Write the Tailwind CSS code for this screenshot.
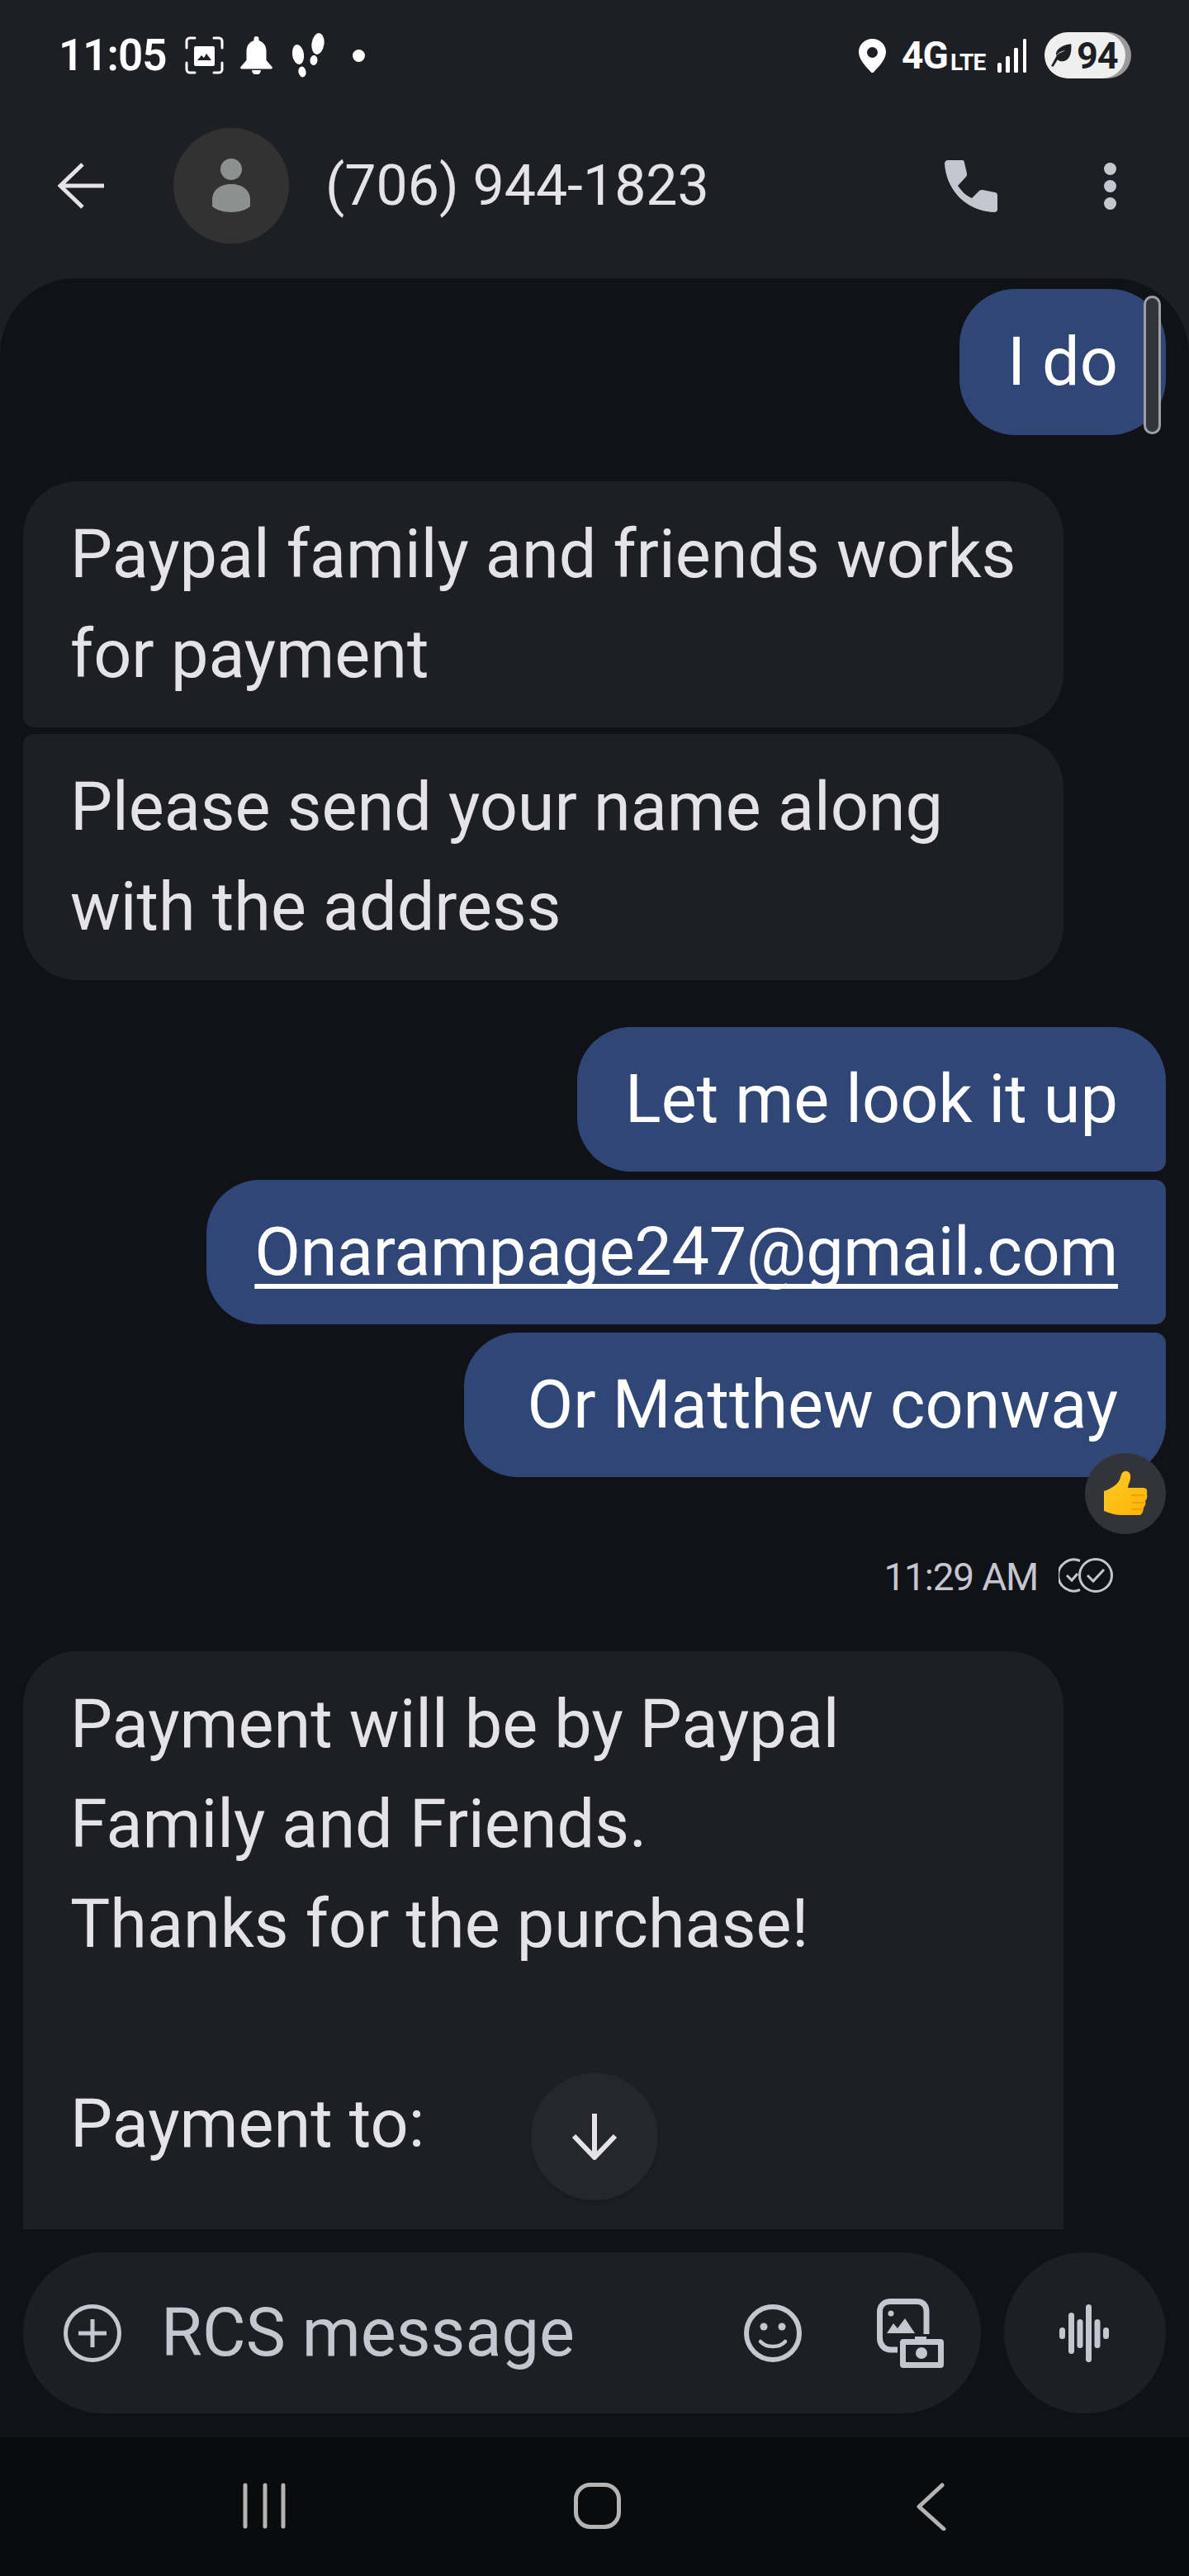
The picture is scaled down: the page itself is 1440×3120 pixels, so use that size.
<!DOCTYPE html>
<html lang="en">
<head>
  <meta charset="UTF-8" />
  <title>Messages</title>
  <script src="https://cdn.jsdelivr.net/npm/@tailwindcss/browser@4"></script>
</head>
<body class="bg-[#1e1f25]">
<div class="w-[1440px] h-[3120px] flex flex-col overflow-hidden bg-[#1e1f25] font-['Roboto',sans-serif]">

  <!-- Status bar -->
  <div class="h-[134px] shrink-0 pl-[71px] pr-[70px] flex items-center justify-between text-white">
    <div class="flex items-center">
      <span class="text-[53px] leading-none font-semibold tracking-[-1px] w-[153px]">11:05</span>
      <svg class="w-[47px] h-[46px] mr-[19px]" viewBox="0 0 47 46" fill="none"><path d="M2 14V6a4 4 0 0 1 4-4h6M35 2h6a4 4 0 0 1 4 4v8M45 32v8a4 4 0 0 1-4 4h-6M12 44H6a4 4 0 0 1-4-4v-8" stroke="#fff" stroke-width="3" stroke-linecap="round"/><rect x="11" y="12" width="25" height="24" rx="2" fill="#fff"/><path d="M15 29l5-6 3 3 3-5 6 8z" fill="#1e1f25"/></svg>
      <svg class="w-[41px] h-[46px] mr-[21px]" viewBox="0 0 41 46" fill="#fff"><path d="M20.500 0a3 3 0 0 1 3 3v2c6 2 9 7 9 13v11l7 8a1.500 1.500 0 0 1-1 2.500H2.500a1.500 1.500 0 0 1-1-2.500l7-8V18c0-6 3-11 9-13V3a3 3 0 0 1 3-3z"/><path d="M15 41h11a5.500 5.500 0 0 1-11 0z"/></svg>
      <svg class="w-[42px] h-[54px] mr-[33px]" viewBox="0 0 42 54" fill="#fff"><ellipse cx="33" cy="13" rx="7.500" ry="13" transform="rotate(8 33 13)"/><ellipse cx="28" cy="33" rx="4.500" ry="6" transform="rotate(8 28 33)"/><ellipse cx="9" cy="26" rx="7" ry="12" transform="rotate(-8 9 26)"/><ellipse cx="14" cy="47" rx="4.500" ry="6.500" transform="rotate(-12 14 47)"/></svg>
      <span class="w-[15px] h-[15px] rounded-full bg-white"></span>
    </div>
    <div class="flex items-center">
      <svg class="w-[33px] h-[41px] mr-[19px]" viewBox="0 0 33 41"><path fill-rule="evenodd" fill="#fff" d="M16.500 0C7.400 0 0 7 0 16c0 9 9 18 14.500 24a2.700 2.700 0 0 0 4 0C24 34 33 25 33 16 33 7 25.600 0 16.500 0zm0 10a6.500 6.500 0 1 1 0 13 6.500 6.500 0 0 1 0-13z"/></svg>
      <span class="text-[46px] leading-none font-bold tracking-[-1px] w-[59px]">4G</span>
      <span class="text-[28px] leading-none font-bold self-end mb-[5px] w-[57px] tracking-[-1px]">LTE</span>
      <svg class="w-[36px] h-[41px] mr-[21px]" viewBox="0 0 36 41" fill="#fff"><rect x="0" y="29" width="5" height="12" rx="2"/><rect x="10" y="21" width="5" height="20" rx="1.500"/><rect x="20" y="11" width="5" height="30" rx="1.500"/><rect x="31" y="0" width="4" height="41" rx="1.500"/></svg>
      <div class="relative w-[105px] h-[56px] rounded-[28px] bg-[#9a9a9a] overflow-hidden">
        <div class="w-[98px] h-[56px] rounded-[28px] bg-[#efefef] flex items-center pl-[8px] text-[#1e1f25]">
          <svg class="w-[26px] h-[32px] shrink-0" viewBox="0 0 30 36" fill="#1e1f25"><path d="M28 2c1 10-1 22-10 24-4 1-7 0-9-2L3 34l-3-1 7-13c2-6 9-6 13-9-5 1-10 3-13 7C6 8 18 3 28 2z"/></svg>
          <span class="text-[45px] leading-none font-bold tracking-[-1px] ml-[5px]">94</span>
        </div>
      </div>
    </div>
  </div>

  <!-- App bar -->
  <div class="h-[203px] shrink-0 pl-[70px] flex items-center pb-[21px]">
    <svg class="w-[56px] h-[56px] mr-[84px]" viewBox="0 0 56 56" fill="none" stroke="#e3e3e8" stroke-width="5"><path d="M56 28H3M30 2L3 28l27 26"/></svg>
    <div class="w-[140px] h-[140px] rounded-full bg-[#323232] flex items-center justify-center mr-[44px]">
      <svg class="w-[46px] h-[66px]" viewBox="0 0 46 66" fill="#8e8f8f"><ellipse cx="23" cy="13" rx="13" ry="13"/><path d="M0 58v-8c0-12 10-19 23-19s23 7 23 19v8c-6 5-14 7-23 7S6 63 0 58z"/></svg>
    </div>
    <span class="text-[68px] leading-none text-[#e3e3e8] w-[750px]">(706) 944-1823</span>
    <svg class="w-[64px] h-[63px] mr-[129px]" viewBox="0 0 64 63" fill="#c5c6d0"><path d="M4 0h17c2 0 3 1 3 3l3 13c0 2 0 3-1 4l-10 11c6 8 10 12 17 15l9-9c1-1 3-1 4-1l15 3c2 0 3 2 3 4v17c0 2-2 3-4 3C27 62 2 37 0 4c0-2 2-4 4-4z"/></svg>
    <svg class="w-[15px] h-[57px]" viewBox="0 0 15 57" fill="#c5c6d0"><circle cx="7.500" cy="7.500" r="7.500"/><circle cx="7.500" cy="28.500" r="7.500"/><circle cx="7.500" cy="49.500" r="7.500"/></svg>
  </div>

  <!-- Conversation -->
  <div class="flex-1 flex flex-col bg-[#111217] rounded-t-[92px] overflow-hidden">
    <div class="h-[2363px] shrink-0 overflow-hidden relative px-[28px] pt-[13px] text-[81px] leading-[121px]">
      <div class="flex flex-col">

        <div class="self-end relative rounded-[68px] bg-[#304676] text-white px-[58px] py-[28px]">
          I do
          <div class="absolute right-[6px] top-[8px] w-[21px] h-[168px] rounded-full bg-[#33353c] border-[3px] border-[#9ea0a6]"></div>
        </div>

        <div class="mt-[56px] w-[1260px] rounded-[65px] rounded-bl-[13px] bg-[#1e1f25] text-[#e3e3e8] pl-[57px] pr-[40px] py-[28px]">Paypal family and friends works for payment</div>
        <div class="mt-[8px] w-[1260px] rounded-[65px] rounded-tl-[13px] bg-[#1e1f25] text-[#e3e3e8] pl-[57px] pr-[40px] py-[28px]">Please send your name along with the address</div>

        <div class="mt-[57px] self-end rounded-[65px] rounded-br-[13px] bg-[#304676] text-white px-[58px] py-[27px]">Let me look it up</div>
        <div class="mt-[10px] self-end rounded-l-[65px] rounded-r-[13px] bg-[#304676] text-white px-[58px] py-[27px] tracking-[-0.35px] underline underline-offset-[11px] decoration-[6px] [text-decoration-skip-ink:none]">Onarampage247@gmail.com</div>
        <div class="mt-[10px] self-end relative rounded-[65px] rounded-tr-[13px] bg-[#304676] text-white pl-[76px] pr-[58px] py-[27px]">
          Or Matthew conway
          <div class="absolute right-0 top-[146px] w-[98px] h-[98px] rounded-full bg-[#33343a] flex items-center justify-center">
            <svg class="w-[54px] h-[57px]" viewBox="0 0 54 57"><defs><linearGradient id="thumb" x1="0" y1="0" x2="1" y2="1"><stop offset="0" stop-color="#ffca28"/><stop offset="1" stop-color="#ffb300"/></linearGradient></defs><path fill="url(#thumb)" d="M1 25c6-2 14-6 18-12 3-4 2-11 7-12 5-1 8 3 7 9-1 5-3 8-3 11h18c4 0 6 2 5 7 1 4 0 7-2 9 1 3 0 6-2 8 0 4-2 9-5 9H22c-6 0-14-2-21-5z"/><path d="M34 30h16M35 39h15M35 47h13" stroke="#f59f00" stroke-width="2" fill="none"/></svg>
          </div>
        </div>

        <div class="mt-[98px] self-end flex items-center pr-[63px] text-[#c5c6d0] h-[42px]">
          <span class="text-[46px] leading-none tracking-[-1.2px] mt-[3px]">11:29 AM</span>
          <svg class="w-[67px] h-[42px] ml-[25px]" viewBox="0 0 67 42" fill="none" stroke="#c5c6d0"><path d="M26 3.500A19 19 0 1 0 26 38.500" stroke-width="3"/><circle cx="45" cy="21" r="19.500" stroke-width="3"/><path d="M10 21l6 6 7-8M35 21l7 7 13-14" stroke-width="3"/></svg>
        </div>

        <div class="mt-[71px] w-[1260px] h-[800px] rounded-t-[65px] bg-[#1e1f25] text-[#e3e3e8] px-[57px] py-[28px]">
          Payment will be by Paypal<br />Family and Friends.<br />Thanks for the purchase!<br /><br />Payment to:
        </div>
      </div>

      <div class="absolute left-[643px] top-[2174px] w-[154px] h-[154px] rounded-full bg-[#26272c] shadow-md flex items-center justify-center">
        <svg class="w-[56px] h-[56px]" viewBox="0 0 56 56" fill="none" stroke="#e3e3e8" stroke-width="6"><path d="M28 0v52M3 27l25 26 25-26"/></svg>
      </div>
    </div>

    <!-- Composer -->
    <div class="mt-[28px] px-[28px] flex justify-between">
      <div class="w-[1160px] h-[195px] rounded-full bg-[#1e1f25] flex items-center pl-[49px]">
        <svg class="w-[70px] h-[70px] mr-[48px]" viewBox="0 0 70 70" fill="none" stroke="#c5c6d0" stroke-width="5"><circle cx="35" cy="35" r="32.500"/><path d="M35 18v34M18 35h34"/></svg>
        <span class="text-[81px] leading-none text-[#c5c6d0] w-[706px]">RCS message</span>
        <svg class="w-[70px] h-[70px] mr-[91px]" viewBox="0 0 70 70" fill="none" stroke="#c5c6d0"><circle cx="35" cy="35" r="32" stroke-width="6"/><circle cx="24" cy="27" r="4.500" fill="#c5c6d0" stroke="none"/><circle cx="46" cy="27" r="4.500" fill="#c5c6d0" stroke="none"/><path d="M20 45c7 8 23 8 30 0" stroke-width="4.500" stroke-linecap="round"/></svg>
        <svg class="w-[81px] h-[84px]" viewBox="0 0 81 84" fill="none"><path d="M25 62H17C9 62 3.500 56 3.500 48V16C3.500 8 9 3.500 17 3.500h31C56 3.500 60 8 60 16v27" stroke="#c5c6d0" stroke-width="7"/><circle cx="17" cy="18" r="3.500" fill="#c5c6d0"/><path d="M12 42l8-12 5 6 9-12 12 18z" fill="#c5c6d0"/><path d="M46 46h14v3h17a4 4 0 0 1 4 4v27a4 4 0 0 1-4 4H32a4 4 0 0 1-4-4V53a4 4 0 0 1 4-4h14z" fill="#c5c6d0"/><rect x="35" y="56" width="39" height="21" fill="#1e1f25"/><ellipse cx="54" cy="66" rx="7" ry="7" fill="#c5c6d0"/></svg>
      </div>
      <div class="w-[196px] h-[195px] rounded-full bg-[#1e1f25] flex items-center justify-center">
        <svg class="w-[60px] h-[70px] ml-[-2px]" viewBox="0 0 60 70" fill="#c5c6d0"><rect x="0" y="28" width="7" height="14" rx="3.500"/><rect x="11" y="10" width="7" height="50" rx="3.500"/><rect x="21.500" y="18" width="7" height="35" rx="3.500"/><rect x="32" y="0" width="7" height="70" rx="3.500"/><rect x="42.500" y="18" width="7" height="35" rx="3.500"/><rect x="53" y="28" width="7" height="14" rx="3.500"/></svg>
      </div>
    </div>
    <div class="flex-1"></div>
  </div>

  <!-- Navigation bar -->
  <div class="h-[168px] shrink-0 bg-[#0a0b0d] relative">
    <svg class="absolute left-[293px] top-[55px] w-[54px] h-[56px]" viewBox="0 0 54 56" fill="none" stroke="#b4b4b4" stroke-width="5" stroke-linecap="round"><path d="M4 3v50M28 3v50M50 3v50"/></svg>
    <div class="absolute left-[695px] top-[55px] w-[57px] h-[56px] rounded-[20px] border-[5px] border-[#b4b4b4]"></div>
    <svg class="absolute left-[1108px] top-[55px] w-[38px] h-[58px]" viewBox="0 0 38 58" fill="none" stroke="#b4b4b4" stroke-width="5" stroke-linecap="round" stroke-linejoin="round"><path d="M33 3L5 29l30 27"/></svg>
  </div>
</div>
</body>
</html>
